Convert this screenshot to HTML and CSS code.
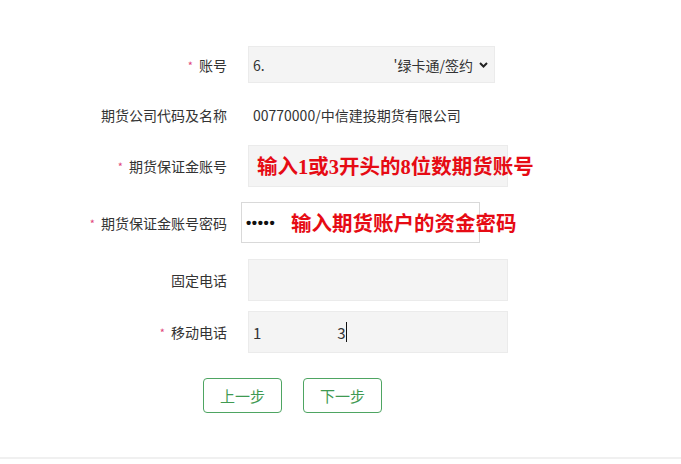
FILE: index.html
```html
<!DOCTYPE html>
<html lang="zh-CN">
<head>
  <meta charset="UTF-8">
  <title>期货保证金账户签约</title>
  <link rel="stylesheet" href="styles.css">
</head>
<body>
  <div class="form">
    <div class="row row-account">
      <label class="label"><span class="req">*</span>账号</label>
      <div class="field select">
        <span class="sel-num">6.</span>
        <span class="sel-type">'绿卡通/签约</span>
        <svg class="chevron" width="9" height="6" viewBox="0 0 9 6"><path d="M1 1 L4.5 4.5 L8 1" fill="none" stroke="#222" stroke-width="2"/></svg>
      </div>
    </div>

    <div class="row row-company">
      <label class="label">期货公司代码及名称</label>
      <div class="field text">00770000/中信建投期货有限公司</div>
    </div>

    <div class="row row-futures">
      <label class="label"><span class="req">*</span>期货保证金账号</label>
      <div class="field input">
        <span class="note note-futures">输入1或3开头的8位数期货账号</span>
      </div>
    </div>

    <div class="row row-password">
      <label class="label"><span class="req">*</span>期货保证金账号密码</label>
      <div class="field input password">
        <span class="dots">•••••</span>
        <span class="note note-password">输入期货账户的资金密码</span>
      </div>
    </div>

    <div class="row row-phone">
      <label class="label">固定电话</label>
      <div class="field input"></div>
    </div>

    <div class="row row-mobile">
      <label class="label"><span class="req">*</span>移动电话</label>
      <div class="field input mobile">
        <span>1</span><span class="gap"></span><span>3</span><span class="caret"></span>
      </div>
    </div>

    <div class="buttons">
      <button class="btn">上一步</button>
      <button class="btn">下一步</button>
    </div>
  </div>
  <div class="footer"></div>
</body>
</html>
```

FILE: styles.css
```css
html {
  background: #fff;
}

body {
  margin: 0;
  font-family: "Noto Sans CJK SC", "Liberation Sans", sans-serif;
  font-size: 14px;
  color: #333;
}

.form {
  display: flex;
  flex-direction: column;
  padding-top: 46px;
  height: 411px;
}

.row {
  display: flex;
  align-items: center;
}

.label {
  width: 227px;
  flex: none;
  text-align: right;
  font-size: 14px;
  color: #333;
}

.req {
  color: #e0457b;
  font-size: 11px;
  margin-right: 6px;
  vertical-align: 1px;
}

.field {
  margin-left: 21px;
  position: relative;
  box-sizing: border-box;
}

.select {
  width: 247px;
  height: 37px;
  background: #f4f4f4;
  border: 1px solid #ebebeb;
  display: flex;
  align-items: center;
  padding: 0 6px 0 4px;
}

.sel-num {
  flex: 1;
}

.sel-type {
  margin-right: 6px;
}

.text {
  margin-left: 26px;
  color: #333;
}

.input {
  width: 260px;
  height: 42px;
  background: #f4f4f4;
  border: 1px solid #ebebeb;
}

.password {
  margin-left: 14px;
  width: 239px;
  height: 41px;
  background: #fff;
  border: 1px solid #d9d9d9;
  display: flex;
  align-items: center;
  padding-left: 4px;
}

.dots {
  font-family: "Liberation Sans", sans-serif;
  font-size: 15px;
  font-weight: bold;
  letter-spacing: 0.6px;
  color: #111;
}

.note {
  position: absolute;
  top: 50%;
  transform: translateY(-52%);
  white-space: nowrap;
  font-family: "Liberation Serif", "Noto Sans CJK SC", serif;
  font-weight: bold;
  font-size: 20.5px;
  color: #e60b14;
}

.note-futures {
  left: 8px;
}

.note-password {
  left: 49px;
}

.mobile {
  display: flex;
  align-items: center;
  padding-left: 4px;
  font-size: 15px;
}

.mobile .gap {
  width: 76px;
}

.caret {
  width: 1px;
  height: 20px;
  background: #111;
  margin-left: 0;
}

.row-company {
  margin-top: 14px;
  height: 36px;
}

.row-futures {
  margin-top: 12px;
}

.row-password {
  margin-top: 15px;
}

.row-phone {
  margin-top: 16px;
}

.row-mobile {
  margin-top: 10px;
}

.buttons {
  display: flex;
  gap: 21px;
  padding-left: 203px;
  margin-top: 25px;
}

.btn {
  width: 79px;
  height: 35px;
  background: #fff;
  border: 1px solid #4ea562;
  border-radius: 4px;
  color: #3f9a52;
  font-family: "Noto Sans CJK SC", sans-serif;
  font-size: 15px;
  padding: 0;
}

.footer {
  border-top: 2px solid #f0f0f0;
}
```
